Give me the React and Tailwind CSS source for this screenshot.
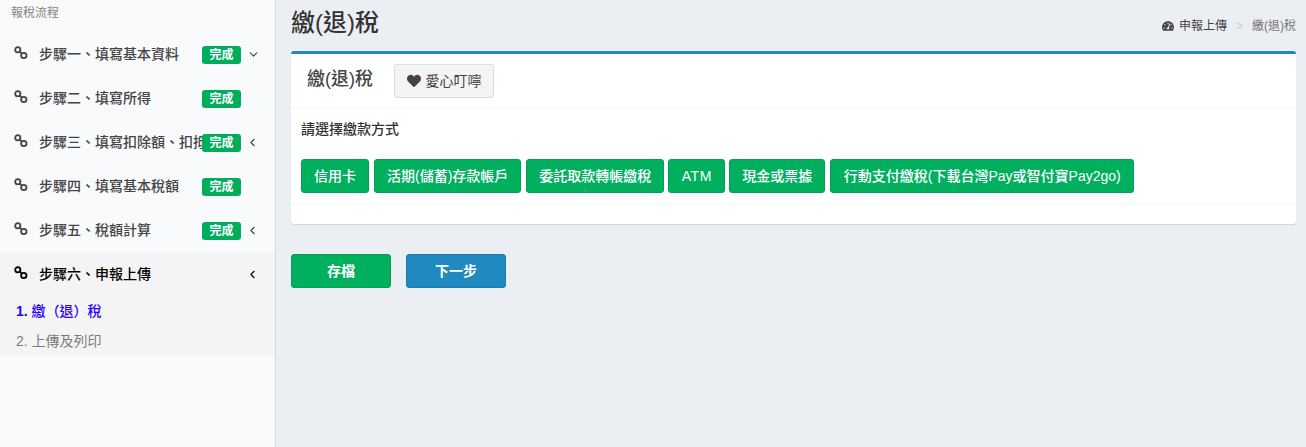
import React from 'react';
import { FaHeart, FaTachometerAlt } from 'react-icons/fa';
import { LuChevronDown, LuChevronLeft } from 'react-icons/lu';

const FONT = 'font-["Liberation_Sans","Noto_Sans_CJK_TC",sans-serif]';

const LinkIcon = () => (
    <svg width="14" height="14" viewBox="0 0 14 14" fill="none" stroke="currentColor" strokeWidth="1.8" className="mb-[2px] shrink-0">
        <circle cx="3.8" cy="3.7" r="2.6" />
        <circle cx="9.8" cy="9.5" r="2.7" />
        <path d="M5.6 5.5l2.4 2.2" />
    </svg>
);

const steps = [
    { label: '步驟一、填寫基本資料', done: true, arrow: 'down' },
    { label: '步驟二、填寫所得', done: true },
    { label: '步驟三、填寫扣除額、扣抵稅額', done: true, arrow: 'left' },
    { label: '步驟四、填寫基本稅額', done: true },
    { label: '步驟五、稅額計算', done: true, arrow: 'left' },
];

const payments = [
    { name: '信用卡', cls: 'px-3' },
    { name: '活期(儲蓄)存款帳戶', cls: 'px-3' },
    { name: '委託取款轉帳繳稅', cls: 'px-3' },
    { name: 'ATM', cls: '-mx-px w-[57px] tracking-[0.5px]' },
    { name: '現金或票據', cls: 'px-3' },
    { name: '行動支付繳稅(下載台灣Pay或智付寶Pay2go)', cls: 'px-[12.5px]' },
];

const StepRow = ({ step }) => (
    <div className="flex h-11 items-center pl-[14px] pr-[15px] text-[#444]">
        <LinkIcon />
        <span className="ml-[11px] min-w-0 flex-1 overflow-hidden whitespace-nowrap text-[14px] font-medium">{step.label}</span>
        <span className="mt-[2px] flex h-[18px] w-[39px] shrink-0 items-center justify-center rounded-[3px] bg-[#00ad5c] text-[12px] font-bold text-white">完成</span>
        <span className="flex w-[19px] shrink-0 justify-end">
            {step.arrow === 'down' && <LuChevronDown size={13} />}
            {step.arrow === 'left' && <LuChevronLeft size={13} className="mr-px" />}
        </span>
    </div>
);

const Sidebar = () => (
    <aside className="h-full w-[276px] shrink-0 border-r border-[#d2d6de] bg-[#f9fafc]">
        <div className="flex h-8 items-start pl-[11px] pt-[5px] text-[12px] leading-4 text-[#848484]">報稅流程</div>
        {steps.map((step) => (
            <StepRow key={step.label} step={step} />
        ))}
        <div className="h-[104px] bg-[#f4f4f5]">
            <div className="flex h-11 items-center pl-[14px] pr-[15px] text-black">
                <LinkIcon />
                <span className="ml-[11px] flex-1 text-[14px] font-medium">步驟六、申報上傳</span>
                <LuChevronLeft size={13} className="mr-px" />
            </div>
            <div className="flex h-[30px] items-center pl-4 text-[14px] font-medium whitespace-pre text-[#2a00ff]">
                <span className="font-bold">1. </span>繳（退）稅
            </div>
            <div className="flex h-[30px] items-center pl-4 text-[14px] text-[#7b7b7b]">2. 上傳及列印</div>
        </div>
    </aside>
);

const Main = () => (
    <main className="min-w-0 flex-1 pl-[15px] pr-[10px]">
        <div className="flex h-[51px] items-start justify-between">
            <h1 className="pt-[7px] text-[24px] font-medium leading-8 text-[#333]">繳(退)稅</h1>
            <div className="flex items-center pt-[18px] text-[12px] leading-4 text-[#444]">
                <FaTachometerAlt size={12} className="mr-[6px] translate-x-px" />
                <span>申報上傳</span>
                <span className="mx-[9px] text-[#ccc]">&gt;</span>
                <span className="text-[#777]">繳(退)稅</span>
            </div>
        </div>

        <section className="h-[173px] rounded-[3px] border-t-[3px] border-[#2089bf] bg-white shadow-[0_1px_1px_rgba(0,0,0,0.1)]">
            <div className="flex h-[55px] items-start border-b border-[#f4f4f4] pl-[16px]">
                <h2 className="pt-[13px] text-[18px] font-medium leading-6 text-[#444]">繳(退)稅</h2>
                <button className="ml-[21px] mt-[10px] flex h-[34px] w-[100px] items-center justify-center rounded-[3px] border border-[#ddd] bg-[#f4f4f4] text-[14px] text-[#444]">
                    <FaHeart size={14} className="mr-[5px]" />
                    愛心叮嚀
                </button>
            </div>
            <div className="h-[95px] border-b border-[#f4f4f4] px-[10px]">
                <p className="pt-[12px] text-[14px] font-medium leading-4 text-[#333]">請選擇繳款方式</p>
                <div className="mt-[22px] flex gap-[5px]">
                    {payments.map((item) => (
                        <button key={item.name} className={`h-[34px] whitespace-nowrap rounded-[3px] border border-[#00a154] bg-[#00b05f] text-[14px] font-medium text-white ${item.cls}`}>
                            {item.name}
                        </button>
                    ))}
                </div>
            </div>
        </section>

        <div className="mt-[30px] flex gap-[15px]">
            <button className="h-[34px] w-[100px] rounded-[3px] border border-[#00a154] bg-[#00b05f] text-[14px] font-bold text-white">存檔</button>
            <button className="h-[34px] w-[100px] rounded-[3px] border border-[#1c7cad] bg-[#2089bf] text-[14px] font-bold text-white">下一步</button>
        </div>
    </main>
);

export default function App() {
    return (
        <div className={`flex h-[447px] w-[1306px] overflow-hidden bg-[#ebeef3] ${FONT}`}>
            <Sidebar />
            <Main />
        </div>
    );
}
